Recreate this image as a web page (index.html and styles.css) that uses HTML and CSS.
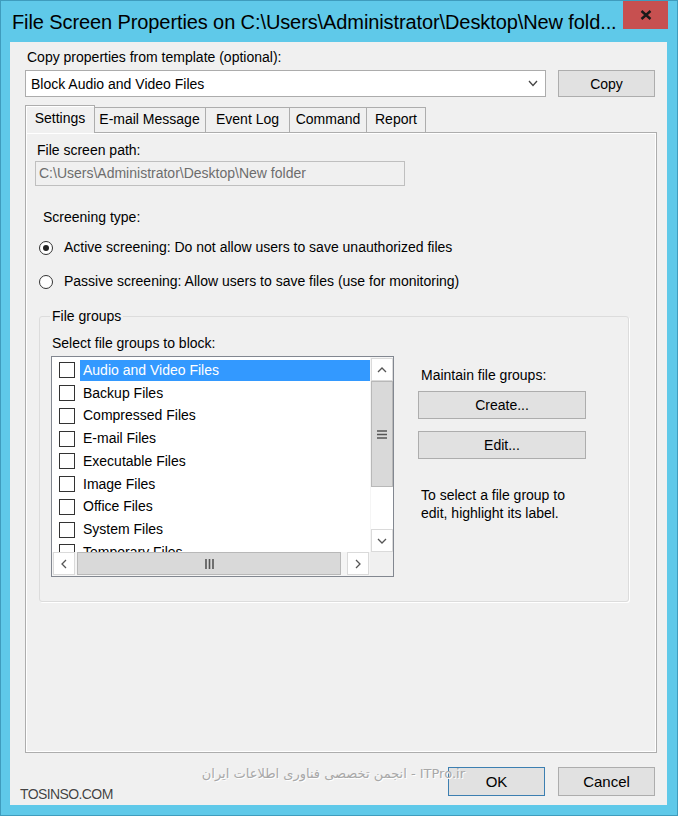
FILE: index.html
```html
<!DOCTYPE html>
<html lang="en">

<head>
	<meta charset="UTF-8">
	<title>File Screen Properties</title>
	<link rel="stylesheet" href="styles.css">
</head>

<body>
	<div class="window">
		<div class="titlebar">
			<div class="title">File Screen Properties on C:\Users\Administrator\Desktop\New fold...</div>
			<div class="close">
				<svg width="12" height="10" viewBox="0 0 12 10"><path d="M1.5 1 L10.5 9 M10.5 1 L1.5 9" stroke="#1a1a1a" stroke-width="2.4" /></svg>
			</div>
		</div>

		<div class="client">
			<div class="tpl-label">Copy properties from template (optional):</div>
			<div class="tpl-row">
				<div class="combo">
					<span>Block Audio and Video Files</span>
					<svg width="10" height="7" viewBox="0 0 10 7"><polyline points="1,1 5,5.5 9,1" fill="none" stroke="#444" stroke-width="1.3" /></svg>
				</div>
				<button class="btn copy">Copy</button>
			</div>

			<div class="tabs">
				<div class="tab active t-settings">Settings</div>
				<div class="tab t-mail">E-mail Message</div>
				<div class="tab t-log">Event Log</div>
				<div class="tab t-cmd">Command</div>
				<div class="tab t-report">Report</div>
			</div>

			<div class="panel">
				<div class="path-label">File screen path:</div>
				<div class="path-box">C:\Users\Administrator\Desktop\New folder</div>

				<div class="screen-label">Screening type:</div>
				<div class="radio first"><span class="dot on"></span>Active screening: Do not allow users to save unauthorized files</div>
				<div class="radio"><span class="dot"></span>Passive screening: Allow users to save files (use for monitoring)</div>

				<fieldset class="groups">
					<legend>File groups</legend>
					<div class="select-label">Select file groups to block:</div>
					<div class="groups-body">
						<div class="listbox">
							<div class="items">
								<div class="item"><span class="chk"></span><span class="name sel">Audio and Video Files</span></div>
								<div class="item"><span class="chk"></span><span class="name">Backup Files</span></div>
								<div class="item"><span class="chk"></span><span class="name">Compressed Files</span></div>
								<div class="item"><span class="chk"></span><span class="name">E-mail Files</span></div>
								<div class="item"><span class="chk"></span><span class="name">Executable Files</span></div>
								<div class="item"><span class="chk"></span><span class="name">Image Files</span></div>
								<div class="item"><span class="chk"></span><span class="name">Office Files</span></div>
								<div class="item"><span class="chk"></span><span class="name">System Files</span></div>
								<div class="item"><span class="chk"></span><span class="name">Temporary Files</span></div>
							</div>
							<div class="vscroll">
								<div class="sbtn"><svg width="10" height="6" viewBox="0 0 10 6"><polyline points="1,5 5,1 9,5" fill="none" stroke="#555" stroke-width="1.3" /></svg></div>
								<div class="vthumb"><svg width="10" height="9" viewBox="0 0 10 9"><path d="M0 1 H10 M0 4.5 H10 M0 8 H10" stroke="#555" stroke-width="1.6" /></svg></div>
								<div class="vtrack"></div>
								<div class="sbtn"><svg width="10" height="6" viewBox="0 0 10 6"><polyline points="1,1 5,5 9,1" fill="none" stroke="#555" stroke-width="1.3" /></svg></div>
							</div>
							<div class="hscroll">
								<div class="sbtn"><svg width="6" height="10" viewBox="0 0 6 10"><polyline points="5,1 1,5 5,9" fill="none" stroke="#555" stroke-width="1.3" /></svg></div>
								<div class="hthumb"><svg width="9" height="10" viewBox="0 0 9 10"><path d="M1 0 V10 M4.5 0 V10 M8 0 V10" stroke="#555" stroke-width="1.6" /></svg></div>
								<div class="sbtn"><svg width="6" height="10" viewBox="0 0 6 10"><polyline points="1,1 5,5 1,9" fill="none" stroke="#555" stroke-width="1.3" /></svg></div>
							</div>
							<div class="corner"></div>
						</div>

						<div class="maintain">
							<div class="maintain-label">Maintain file groups:</div>
							<button class="btn wide">Create...</button>
							<button class="btn wide edit">Edit...</button>
							<div class="hint">To select a file group to<br>edit, highlight its label.</div>
						</div>
					</div>
				</fieldset>
			</div>

			<div class="footer">
				<button class="btn ok">OK</button>
				<button class="btn">Cancel</button>
			</div>
		</div>

		<div class="mark-fa">انجمن تخصصی فناوری اطلاعات ایران - ITPro.ir</div>
		<div class="mark-en">TOSINSO.COM</div>
	</div>
</body>

</html>
```

FILE: styles.css
```css
body {
	margin: 0;
	font: 14px 'Liberation Sans', Arial, sans-serif;
	color: #000;
	background-color: #5fc9e9;
}

.window {
	position: relative;
	box-sizing: border-box;
	width: 678px;
	height: 816px;
	background-color: #5fc9e9;
	border: 1px solid #3f9cbd;
	overflow: hidden;
}

.titlebar {
	display: flex;
	justify-content: space-between;
	height: 41px;
	padding-left: 11px;
	padding-right: 9px;
}

.title {
	font-size: 20px;
	line-height: 20px;
	padding-top: 11px;
	white-space: nowrap;
	letter-spacing: -0.1px;
}

.close {
	display: flex;
	align-items: center;
	justify-content: center;
	width: 45px;
	height: 29px;
	margin-top: -1px;
	background-color: #c75050;
}

.client {
	margin: 0 10px 0 9px;
	height: 763px;
	box-sizing: border-box;
	background-color: #f0f0f0;
	padding-top: 7px;
}

.tpl-label {
	margin-left: 17px;
	line-height: 17px;
}

.tpl-row {
	display: flex;
	margin-top: 4px;
	margin-left: 15px;
}

.combo {
	display: flex;
	align-items: center;
	justify-content: space-between;
	box-sizing: border-box;
	width: 521px;
	height: 27px;
	padding: 0 7px 0 5px;
	background-color: #fff;
	border: 1px solid #acacac;
}

.btn {
	box-sizing: border-box;
	width: 97px;
	height: 27px;
	padding: 0;
	font: 14px 'Liberation Sans', Arial, sans-serif;
	color: #000;
	background-color: #e1e1e1;
	border: 1px solid #adadad;
}

.copy {
	margin-left: 12px;
}

.tabs {
	display: flex;
	align-items: flex-end;
	height: 27px;
	margin-top: 8px;
	margin-left: 17px;
}

.tab {
	box-sizing: border-box;
	height: 25px;
	line-height: 23px;
	text-align: center;
	background-color: #f0f0f0;
	border: 1px solid #adadad;
	border-bottom: none;
	margin-left: -1px;
}

.tab.active {
	position: relative;
	height: 28px;
	margin: 0 -1px -1px -2px;
	line-height: 25px;
	box-shadow: inset 1px 1px 0 #fff;
	z-index: 1;
}

.t-settings {
	width: 70px;
}

.t-mail {
	width: 113px;
}

.t-log {
	width: 85px;
}

.t-cmd {
	width: 78px;
}

.t-report {
	width: 60px;
}

.panel {
	box-sizing: border-box;
	width: 632px;
	height: 621px;
	margin-left: 15px;
	padding-top: 9px;
	background-color: #f0f0f0;
	border: 1px solid #adadad;
	box-shadow: inset 1px 1px 0 #fff, inset -1px -1px 0 #fff;
}

.path-label {
	margin-left: 11px;
	line-height: 17px;
}

.path-box {
	box-sizing: border-box;
	width: 370px;
	height: 25px;
	margin: 2px 0 0 9px;
	padding-left: 3px;
	line-height: 23px;
	color: #6d6d6d;
	border: 1px solid #bfbfbf;
	background-color: #f0f0f0;
}

.screen-label {
	margin: 23px 0 0 17px;
	line-height: 17px;
}

.radio {
	display: flex;
	align-items: center;
	margin: 17px 0 0 13px;
	line-height: 17px;
}

.radio.first {
	margin-top: 13px;
}

.dot {
	display: flex;
	align-items: center;
	justify-content: center;
	box-sizing: border-box;
	width: 14px;
	height: 14px;
	margin-right: 11px;
	border: 1px solid #333;
	border-radius: 50%;
	background-color: #fff;
}

.dot.on::after {
	content: '';
	width: 6px;
	height: 6px;
	border-radius: 50%;
	background-color: #222;
}

.groups {
	box-sizing: border-box;
	width: 590px;
	height: 294px;
	margin: 18px 0 0 13px;
	padding: 0;
	border: 1px solid #dcdcdc;
	border-radius: 3px;
	box-shadow: 1px 1px 0 #fff;
}

.groups legend {
	margin-left: 10px;
	padding: 0 2px;
	line-height: 17px;
}

.select-label {
	margin: 10px 0 0 12px;
	line-height: 17px;
}

.groups-body {
	display: flex;
	margin-top: 4px;
	margin-left: 11px;
}

.listbox {
	display: grid;
	grid-template-columns: 318px 23px;
	grid-template-rows: 195px 24px;
	width: 343px;
	height: 221px;
	box-sizing: border-box;
	border: 1px solid #828790;
	background-color: #fff;
}

.items {
	overflow: hidden;
	padding-top: 2px;
}

.item {
	display: flex;
	align-items: center;
	height: 22.75px;
	padding-left: 7px;
}

.chk {
	box-sizing: border-box;
	width: 16px;
	height: 16px;
	border: 1px solid #333;
	background-color: #fff;
}

.name {
	margin-left: 5px;
	padding: 0 3px;
	line-height: 21px;
	white-space: nowrap;
}

.name.sel {
	flex: 1;
	color: #fff;
	background-color: #3399ff;
}

.vscroll {
	display: flex;
	flex-direction: column;
	padding: 1px 0 0 1px;
	background-color: #f5f5f5;
}

.hscroll {
	display: flex;
	align-items: stretch;
	padding: 0 1px 1px 1px;
	background-color: #f5f5f5;
}

.sbtn {
	display: flex;
	align-items: center;
	justify-content: center;
	box-sizing: border-box;
	width: 22px;
	height: 23px;
	background-color: #fff;
	border: 1px solid #dadada;
}

.vthumb {
	display: flex;
	align-items: center;
	justify-content: center;
	height: 104px;
	background-color: #d9d9d9;
	border: 1px solid #b8b8b8;
}

.vtrack {
	flex: 1;
	background-color: #fff;
}

.hthumb {
	display: flex;
	align-items: center;
	justify-content: center;
	width: 262px;
	margin: 0 6px 0 2px;
	background-color: #d9d9d9;
	border: 1px solid #b8b8b8;
}

.corner {
	background-color: #f0f0f0;
}

.maintain {
	margin-left: 24px;
	padding-top: 11px;
}

.maintain-label {
	margin-left: 3px;
	line-height: 17px;
}

.wide {
	display: block;
	width: 168px;
	height: 28px;
	margin-top: 7px;
}

.wide.edit {
	margin-top: 12px;
}

.hint {
	margin: 27px 0 0 3px;
	line-height: 18px;
}

.footer {
	display: flex;
	justify-content: flex-end;
	gap: 13px;
	margin-top: 14px;
	padding-right: 12px;
}

.footer .btn {
	height: 29px;
	font-size: 15px;
}

.ok {
	border-color: #3c7fb1;
}

.mark-fa {
	position: absolute;
	right: 212px;
	top: 765px;
	font: 13px 'DejaVu Sans', sans-serif;
	color: #a8a8a8;
	text-shadow: 1px 1px 0 #fff;
}

.mark-en {
	position: absolute;
	left: 19px;
	top: 785px;
	font: 14px 'Liberation Sans', Arial, sans-serif;
	letter-spacing: -0.6px;
	color: #444;
	text-shadow: 0 0 1px #fff, 0 0 1px #fff;
}
```
